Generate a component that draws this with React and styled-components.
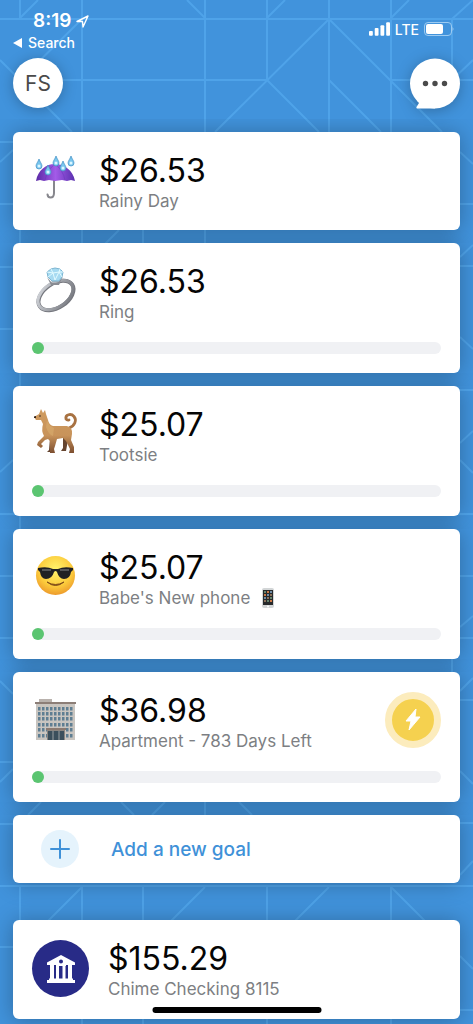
import React from "react";
import styled, { createGlobalStyle } from "styled-components";

const GlobalStyle = createGlobalStyle`
  *, *::before, *::after { box-sizing: border-box; }
  body {
    margin: 0;
    background: #4193dc;
    font-family: Inter, "Liberation Sans", sans-serif;
    color: #050505;
  }
  p, h1, h2, ul { margin: 0; padding: 0; }
  button { font: inherit; border: 0; padding: 0; cursor: pointer; }
`;

const Screen = styled.div`
  position: relative;
  min-height: 100vh;
  padding: 0 13px 5px;
  overflow: hidden;
  isolation: isolate;
`;

const Backdrop = styled.svg`
  position: absolute;
  inset: 0;
  z-index: -1;
  fill: none;
  stroke: #4fa3e9;
  stroke-width: 2;
`;

const StatusBar = styled.div`
  display: flex;
  justify-content: space-between;
  height: 58px;
  color: #fff;
`;

const StatusLeft = styled.div`
  padding-top: 10px;
`;

const Clock = styled.div`
  display: flex;
  align-items: center;
  gap: 5px;
  padding-left: 20px;
  font-size: 19px;
  line-height: 22px;
  font-weight: 600;
`;

const BackLink = styled.a`
  display: flex;
  align-items: center;
  gap: 6px;
  font-size: 14px;
  line-height: 22px;
  font-weight: 500;
  color: inherit;
  text-decoration: none;
`;

const StatusRight = styled.div`
  display: flex;
  align-items: center;
  gap: 5px;
  height: 58px;
  padding-right: 6px;
  font-size: 14px;
  font-weight: 500;
`;

const Header = styled.header`
  display: flex;
  justify-content: space-between;
  height: 74px;
`;

const Avatar = styled.button`
  width: 50px;
  height: 50px;
  border-radius: 50%;
  background: #fff;
  color: #4a4a4a;
  font-size: 21px;
  box-shadow: 0 2px 14px rgba(0, 0, 0, 0.25);
`;

const ChatButton = styled.button`
  width: 50px;
  height: 50px;
  background: none;
  filter: drop-shadow(0 2px 7px rgba(0, 0, 0, 0.25));
  svg { display: block; }
`;

const Goals = styled.ul`
  display: flex;
  flex-direction: column;
  gap: 13px;
  list-style: none;
`;

const cardShadow = "0 1px 22px rgba(0, 0, 0, 0.28)";

const Card = styled.li`
  padding: 20px 19px 18px;
  border-radius: 6px;
  background: #fff;
  box-shadow: ${cardShadow};
  clip-path: inset(-13px -13px -13px -13px);
`;

const CardRow = styled.div`
  display: flex;
  gap: ${(p) => (p.$wide ? 19 : 20)}px;
  height: 60px;
`;

const EmojiBox = styled.div`
  width: 47px;
  height: 52px;
  svg { display: block; }
`;

const CardText = styled.div`
  flex: 1;
  min-width: 0;
`;

const Amount = styled.h2`
  font-size: 32px;
  line-height: 38px;
  font-weight: 400;
`;

const Caption = styled.p`
  display: flex;
  align-items: center;
  gap: 11px;
  font-size: 17px;
  line-height: 22px;
  color: #7d7f83;
`;

const Progress = styled.div`
  height: 12px;
  margin: 19px 0 1px;
  border-radius: 6px;
  background: #f0f1f4;
`;

const ProgressFill = styled.div`
  min-width: 12px;
  height: 12px;
  border-radius: 6px;
  background: #5bc571;
`;

const BoostButton = styled.button`
  display: grid;
  place-items: center;
  width: 56px;
  height: 56px;
  border: 7px solid #fcecbd;
  border-radius: 50%;
  background: #f5d14f;
`;

const AddGoal = styled.button`
  display: flex;
  align-items: center;
  gap: 32px;
  width: 100%;
  height: 68px;
  margin: 13px 0 37px;
  padding: 0 28px;
  border-radius: 6px;
  background: #fff;
  color: #3f91d8;
  font-size: 19px;
  font-weight: 500;
  box-shadow: ${cardShadow};
  clip-path: inset(-13px -13px -30px -13px);
`;

const PlusBadge = styled.span`
  display: grid;
  place-items: center;
  width: 38px;
  height: 38px;
  border-radius: 50%;
  background: #e5f3fc;
`;

const AccountCard = styled.section`
  padding: 20px 19px 19px;
  border-radius: 6px;
  background: #fff;
  box-shadow: ${cardShadow};
`;

const BankBadge = styled.div`
  display: grid;
  place-items: center;
  width: 57px;
  height: 57px;
  border-radius: 50%;
  background: #282b87;
`;

const HomeIndicator = styled.div`
  position: fixed;
  bottom: 11px;
  left: 50%;
  width: 169px;
  height: 6px;
  border-radius: 3px;
  background: #000;
  transform: translateX(-50%);
`;

const Pattern = () => (
  <Backdrop width="100%" height="1024" aria-hidden="true">
    <path d="M0 19H473M62 80H267M391 80H473M20 0V19M82 0V132M205 0V132M267 0V80M329 0V132M391 0V132M452 19V80M20 18L38 0M187 0L205 18M267 18L285 0M391 18L409 0M452 19L473 0M329 19L215 132M267 80L319 132M329 19L442 132M329 80L381 132M82 19L20 80M0 60L72 132M473 60L452 80" />
    <path d="M0 142H20M0 204H20M0 267H20M0 329H20M0 514H20M0 576H20M0 638H20M0 762H20M0 824H20M0 886H473M0 947H20M0 162L13 150M0 472L13 460M0 681L13 694M0 782L13 769" />
    <path d="M455 204H473M455 266H473M455 390H473M455 514H473M455 576H473M455 638H473M455 700H473M455 823H473M455 1010H473M460 152L473 164M460 257L473 245M460 337L473 349M460 443L473 431M460 460L473 473M460 627L473 616M460 691L473 678M460 771L473 784M460 875L473 861M460 956L473 969" />
    <path d="M20 230V248M82 230V248M143 230V248M205 230V248M105 244L119 230M20 373V386M20 516V529M452 659V672M20 886V920M82 886V920M143 886V920M267 886V920M391 886V920M82 887L48 921M205 887L171 921M329 887L295 921M391 887L425 921M28 815L41 802M121 802L134 815M152 815L165 802M205 802V815M239 802L252 815M82 1019V1024M143 1019V1024M267 1019V1024M391 1019V1024" />
  </Backdrop>
);

const drops = [[7, 8], [24, 5], [31, 10], [39, 5], [16, 14]];

const Umbrella = () => (
  <svg width="47" height="52" viewBox="0 0 47 52" aria-hidden="true">
    <defs>
      <linearGradient id="canopy" x1="0" x2="1">
        <stop offset="0" stopColor="#5a2aa5" />
        <stop offset=".5" stopColor="#a35be8" />
        <stop offset="1" stopColor="#5930ae" />
      </linearGradient>
    </defs>
    <path d="M22 27V41Q22 45.500 18.500 45.500Q16 45.500 15.500 42.500" fill="none" stroke="#87878d" strokeWidth="2" strokeLinecap="round" />
    <path d="M4 29C6 18 14 12 23 12S41 18 43 29L39 28L35 29L30 28L23 29L17 28L12 29L8 28Z" fill="url(#canopy)" />
    <path d="M23 12Q15 18 13 28M23 12Q31 18 33 28" stroke="#6934bb" fill="none" opacity=".5" />
    {drops.map(([x, y]) => (
      <g key={`${x}-${y}`}>
        <path d={`M${x} ${y - 1}C${x - 1} ${y + 2} ${x - 3} ${y + 4} ${x - 3} ${y + 6}A3 3 0 0 0 ${x + 3} ${y + 6}C${x + 3} ${y + 4} ${x + 1} ${y + 2} ${x} ${y - 1}Z`} fill="#78c6ee" stroke="#438fc4" strokeWidth=".7" />
        <circle cx={x} cy={y + 6} r="1.5" fill="#dcf7ff" />
      </g>
    ))}
  </svg>
);

const Ring = () => (
  <svg width="47" height="52" viewBox="0 0 47 52" aria-hidden="true">
    <defs>
      <linearGradient id="silver" x1="0" y1="0" x2="1" y2="1">
        <stop offset="0" stopColor="#d9dce1" />
        <stop offset=".45" stopColor="#a6a9af" />
        <stop offset="1" stopColor="#707279" />
      </linearGradient>
    </defs>
    <ellipse cx="24" cy="32.500" rx="19.500" ry="12" transform="rotate(-34 24 32.500)" fill="none" stroke="#74767d" strokeWidth="4" />
    <ellipse cx="23.500" cy="32" rx="19.500" ry="12" transform="rotate(-34 23.500 32)" fill="none" stroke="url(#silver)" strokeWidth="3" />
    <path d="M15 14L20 20H26L31 13L27 22H19Z" fill="#898c93" />
    <path d="M15 9L19 6L23 5L28 6L31 9L30 14L27 18H20L16 14Z" fill="#a6daf1" stroke="#7db5d1" />
    <path d="M15 9L21 10L27 9L31 9M19 6L21 10L23 17L27 9L28 6M16 14L21 10M30 14L27 9" fill="none" stroke="#e2faff" strokeWidth="1" />
  </svg>
);

const Dog = () => (
  <svg width="47" height="52" viewBox="0 0 47 52" aria-hidden="true">
    <defs>
      <linearGradient id="fur" x1="0" y1="0" x2="0" y2="1">
        <stop offset="0" stopColor="#d09c60" />
        <stop offset=".6" stopColor="#c8935a" />
        <stop offset="1" stopColor="#7d4e30" />
      </linearGradient>
    </defs>
    <path d="M37 22C43 20 45 14 42 10.500C39 7 33 8.500 34 13Q35 14.500 37 14" fill="none" stroke="#a87242" strokeWidth="2.800" strokeLinecap="round" />
    <path d="M18 32L17 44L15 46H20L24 34M31 31L31 42L29 45H34L36 34" fill="#65442f" />
    <path d="M2 11L7 8L9 3L11 7L13 4L14 8L16 14Q17 19 21 20H35Q41 22 40 28L39 34L42 41V47H37L38 43L34 35L31 32L25 33L23 40L22 43L23 47H18L18 35L16 33L13 34L9 38L11 40L9 42L5 39L6 36L12 30Q9 25 11 18L9 14L4 14Z" fill="url(#fur)" />
    <path d="M15 14Q17 20 22 22L21 30Q16 28 14 21Z" fill="#e0b878" opacity=".4" />
    <circle cx="8" cy="10" r=".8" fill="#30231d" />
    <path d="M2 10.500L4 10V12H2Z" fill="#30231d" />
  </svg>
);

const Sunglasses = () => (
  <svg width="47" height="52" viewBox="0 0 47 52" aria-hidden="true">
    <defs>
      <radialGradient id="face" cx=".5" cy=".35" r=".65">
        <stop offset="0" stopColor="#fff46d" />
        <stop offset=".65" stopColor="#fccb3c" />
        <stop offset="1" stopColor="#ed9b2c" />
      </radialGradient>
    </defs>
    <circle cx="23.500" cy="26.500" r="19.500" fill="url(#face)" />
    <path d="M6 19Q15 17 21 20H26Q32 17 41 19V21L39 23Q38 30 32 30Q27 30 25 23Q23.500 21 22 23Q20 30 14 30Q9 30 8 23L6 21Z" fill="#202124" />
    <path d="M10 21H19M28 21H37" stroke="#64676a" strokeWidth="1.300" />
    <path d="M15 33Q23.500 40 32 33Q23.500 38 15 33Z" fill="#84501a" stroke="#84501a" strokeWidth="1" />
  </svg>
);

const Building = () => (
  <svg width="47" height="52" viewBox="0 0 47 52" aria-hidden="true">
    <path d="M7 7H20V11H7Z" fill="#b9b2ad" />
    <path d="M4 11H43V48H4Z" fill="#c9c5c0" />
    <path d="M3 10H44V12H3Z" fill="#8c7e77" />
    {[15, 20, 25, 31, 36, 42].map((y) =>
      [6, 10, 14, 18, 22, 26, 30, 34, 38].map((x) => (
        <rect key={`${x}-${y}`} x={x} y={y} width="2.5" height="3.5" fill="#5f7e92" />
      ))
    )}
    <path d="M15 36H33V48H15Z" fill="#8b8580" />
    <path d="M16 39H32V48H16Z" fill="#3b4f5c" />
    <path d="M21 39V48M27 39V48" stroke="#9da2a3" />
    <path d="M14 36H34V38H14Z" fill="#8b7a71" />
  </svg>
);

const Phone = () => (
  <svg width="14" height="20" viewBox="0 0 14 20" role="img" aria-label="mobile phone">
    <rect x="1" y="0" width="12" height="20" rx="2" fill="#d3d6d7" />
    <path d="M2 2H12V17H2Z" fill="#272a2c" />
    {[3, 6, 9, 12].map((y, r) =>
      [3, 6, 9].map((x, c) => (
        <rect key={`${x}-${y}`} x={x} y={y} width="2" height="2" fill={["#66846d", "#cc7845", "#718ea8", "#8b705a"][(r + c) % 4]} />
      ))
    )}
    <circle cx="7" cy="18.5" r="1" fill="#fff" />
  </svg>
);

const goals = [
  { amount: "$26.53", name: "Rainy Day", Icon: Umbrella },
  { amount: "$26.53", name: "Ring", Icon: Ring, progress: 1 },
  { amount: "$25.07", name: "Tootsie", Icon: Dog, progress: 1 },
  { amount: "$25.07", name: "Babe's New phone", Icon: Sunglasses, progress: 1, phone: true },
  { amount: "$36.98", name: "Apartment - 783 Days Left", Icon: Building, progress: 1, boost: true },
];

const GoalCard = ({ amount, name, Icon, progress, phone, boost }) => (
  <Card>
    <CardRow>
      <EmojiBox><Icon /></EmojiBox>
      <CardText>
        <Amount>{amount}</Amount>
        <Caption>{name}{phone && <Phone />}</Caption>
      </CardText>
      {boost && (
        <BoostButton aria-label="Boost goal">
          <svg width="18" height="24" viewBox="0 0 18 24" aria-hidden="true">
            <path d="M12 1L2 13H7L5 22L16 9H11Z" fill="#fff" stroke="#fff" strokeLinejoin="round" />
          </svg>
        </BoostButton>
      )}
    </CardRow>
    {progress !== undefined && (
      <Progress role="progressbar" aria-label={name} aria-valuenow={progress} aria-valuemin={0} aria-valuemax={100}>
        <ProgressFill style={{ width: `${progress}%` }} />
      </Progress>
    )}
  </Card>
);

export default function App() {
  return (
    <Screen>
      <GlobalStyle />
      <Pattern />
      <StatusBar>
        <StatusLeft>
          <Clock>
            8:19
            <svg width="13" height="13" viewBox="0 0 13 13" aria-hidden="true">
              <path d="M1 6.500L12 1L7 12L6.500 6.500Z" fill="none" stroke="#fff" strokeWidth="1.400" strokeLinejoin="round" />
            </svg>
          </Clock>
          <BackLink href="#search">
            <svg width="9" height="10" viewBox="0 0 9 10" aria-hidden="true"><path d="M0 5L9 0V10Z" fill="#fff" /></svg>
            Search
          </BackLink>
        </StatusLeft>
        <StatusRight>
          <svg width="21" height="14" viewBox="0 0 22 14" fill="#fff" aria-hidden="true">
            <rect x="0" y="9" width="4" height="5" rx="1" />
            <rect x="6" y="6" width="4" height="8" rx="1" />
            <rect x="12" y="3" width="4" height="11" rx="1" />
            <rect x="18" y="0" width="4" height="14" rx="1" />
          </svg>
          LTE
          <svg width="30" height="14" viewBox="0 0 30 14" aria-hidden="true">
            <rect x=".5" y=".5" width="27" height="13" rx="3.5" fill="none" stroke="#9ccbf2" />
            <rect x="2" y="2" width="17" height="10" rx="2" fill="#fff" />
            <path d="M28.500 5Q30.500 7 28.500 9Z" fill="#9ccbf2" />
          </svg>
        </StatusRight>
      </StatusBar>
      <Header>
        <Avatar aria-label="Profile FS">FS</Avatar>
        <ChatButton aria-label="Messages">
          <svg width="50" height="51" viewBox="0 0 50 51" aria-hidden="true">
            <circle cx="25" cy="25.500" r="25" fill="#fff" />
            <path d="M25 50.500H7Q6 50 6.500 49L9 45L7 42L20 35Z" fill="#fff" />
            <g fill="#4a4a4a">
              <circle cx="15.500" cy="25.500" r="2.700" />
              <circle cx="25" cy="25.500" r="2.700" />
              <circle cx="34.500" cy="25.500" r="2.700" />
            </g>
          </svg>
        </ChatButton>
      </Header>
      <main>
        <Goals>
          {goals.map((goal) => <GoalCard key={goal.name} {...goal} />)}
        </Goals>
        <AddGoal>
          <PlusBadge>
            <svg width="20" height="20" viewBox="0 0 20 20" aria-hidden="true">
              <path d="M10 1V19M1 10H19" stroke="#3f91d8" strokeWidth="2" strokeLinecap="round" />
            </svg>
          </PlusBadge>
          Add a new goal
        </AddGoal>
        <AccountCard>
          <CardRow $wide>
            <BankBadge>
              <svg width="28" height="28" viewBox="0 0 28 28" fill="#fff" aria-hidden="true">
                <path fillRule="evenodd" d="M14 0L28 7.500V10H0V7.500ZM14 4.500A2 2 0 1 0 14 8.500A2 2 0 1 0 14 4.500Z" />
                <path d="M3 10H7V24H3ZM9 10H12V24H9ZM9 10H19V11H9ZM15.500 10H18.500V24H15.500ZM21 10H25V24H21Z" />
                <path d="M2 23.500H26V25H28V28H0V25H2Z" />
              </svg>
            </BankBadge>
            <CardText>
              <Amount>$155.29</Amount>
              <Caption>Chime Checking 8115</Caption>
            </CardText>
          </CardRow>
        </AccountCard>
      </main>
      <HomeIndicator />
    </Screen>
  );
}
